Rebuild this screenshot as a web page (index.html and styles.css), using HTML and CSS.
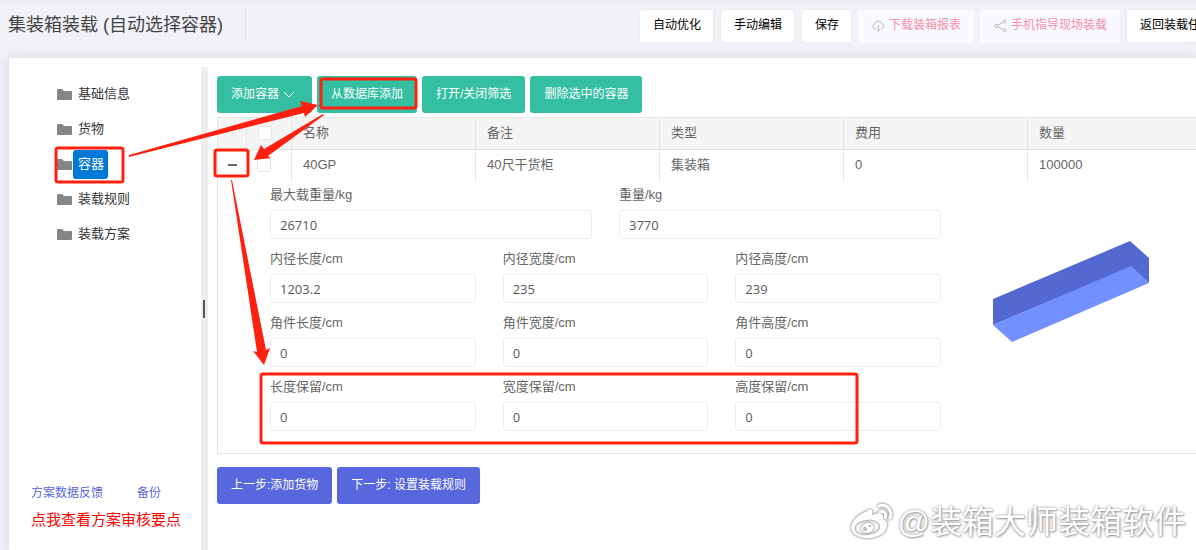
FILE: index.html
```html
<!DOCTYPE html>
<html lang="zh-CN">
<head>
<meta charset="utf-8">
<title>集装箱装载</title>
<link rel="stylesheet" href="styles.css">
</head>
<body>
<div class="page">
  <header class="header">
    <h1 class="title">集装箱装载 (自动选择容器)</h1>
    <div class="toolbar">
      <button class="tool">自动优化</button>
      <button class="tool">手动编辑</button>
      <button class="tool">保存</button>
      <button class="tool" disabled>
        <svg class="icon" viewBox="0 0 14 14"><path d="M4 10.5H3.4A2.7 2.7 0 0 1 3 5.200A4 4 0 0 1 10.800 5.200A2.700 2.700 0 0 1 10.600 10.500H10M7 6.500V13M5.300 11.300L7 13L8.700 11.300"/></svg>下载装箱报表</button>
      <button class="tool" disabled>
        <svg class="icon" viewBox="0 0 14 14"><circle cx="2.500" cy="7.500" r="1.700"/><circle cx="11.300" cy="2.700" r="1.700"/><circle cx="11.300" cy="12" r="1.700"/><path d="M4 6.700L9.800 3.500M4 8.300L9.800 11.300"/></svg>手机指导现场装载</button>
      <button class="tool">返回装载任务</button>
    </div>
  </header>

  <div class="panel">
    <aside class="sidebar">
      <nav class="tree">
        <a class="node" href="#"><svg class="folder" viewBox="0 0 15 11"><path d="M0 1Q0 0 1 0H5L7 2H14Q15 2 15 3V10Q15 11 14 11H1Q0 11 0 10Z"/></svg><span class="name">基础信息</span></a>
        <a class="node" href="#"><svg class="folder" viewBox="0 0 15 11"><path d="M0 1Q0 0 1 0H5L7 2H14Q15 2 15 3V10Q15 11 14 11H1Q0 11 0 10Z"/></svg><span class="name">货物</span></a>
        <a class="node" href="#"><svg class="folder" viewBox="0 0 15 11"><path d="M0 1Q0 0 1 0H5L7 2H14Q15 2 15 3V10Q15 11 14 11H1Q0 11 0 10Z"/></svg><span class="name selected">容器</span></a>
        <a class="node" href="#"><svg class="folder" viewBox="0 0 15 11"><path d="M0 1Q0 0 1 0H5L7 2H14Q15 2 15 3V10Q15 11 14 11H1Q0 11 0 10Z"/></svg><span class="name">装载规则</span></a>
        <a class="node" href="#"><svg class="folder" viewBox="0 0 15 11"><path d="M0 1Q0 0 1 0H5L7 2H14Q15 2 15 3V10Q15 11 14 11H1Q0 11 0 10Z"/></svg><span class="name">装载方案</span></a>
      </nav>
      <div class="side-links">
        <div class="link-row"><a class="link" href="#">方案数据反馈</a><a class="link" href="#">备份</a></div>
        <a class="tips" href="#">点我查看方案审核要点</a>
      </div>
    </aside>
    <div class="splitter"><span class="grip"></span></div>

    <main class="content">
      <div class="actions">
        <button class="btn green menu">添加容器<svg class="chevron" viewBox="0 0 12 12"><path d="M1 4L6 9L11 4"/></svg></button>
        <button class="btn green">从数据库添加</button>
        <button class="btn green">打开/关闭筛选</button>
        <button class="btn green">删除选中的容器</button>
      </div>

      <table class="grid">
        <colgroup><col class="c-expand"><col class="c-check"><col class="c-data"><col class="c-data"><col class="c-data"><col class="c-data"><col></colgroup>
        <thead>
          <tr><th></th><th class="check"><input type="checkbox" aria-label="全选"></th><th>名称</th><th>备注</th><th>类型</th><th>费用</th><th>数量</th></tr>
        </thead>
        <tbody>
          <tr class="row"><td class="expand"><button class="toggle" aria-label="收起"></button></td><td class="check"><input type="checkbox" aria-label="40GP"></td><td>40GP</td><td>40尺干货柜</td><td>集装箱</td><td>0</td><td>100000</td></tr>
          <tr><td class="detail" colspan="7">
            <div class="detail-body">
              <form class="form">
                <div class="field half"><label for="f1">最大载重量/kg</label><input id="f1" type="text" value="26710"></div>
                <div class="field half"><label for="f2">重量/kg</label><input id="f2" type="text" value="3770"></div>
                <div class="field"><label for="f3">内径长度/cm</label><input id="f3" type="text" value="1203.2"></div>
                <div class="field"><label for="f4">内径宽度/cm</label><input id="f4" type="text" value="235"></div>
                <div class="field"><label for="f5">内径高度/cm</label><input id="f5" type="text" value="239"></div>
                <div class="field"><label for="f6">角件长度/cm</label><input id="f6" type="text" value="0"></div>
                <div class="field"><label for="f7">角件宽度/cm</label><input id="f7" type="text" value="0"></div>
                <div class="field"><label for="f8">角件高度/cm</label><input id="f8" type="text" value="0"></div>
                <div class="field"><label for="f9">长度保留/cm</label><input id="f9" type="text" value="0"></div>
                <div class="field"><label for="f10">宽度保留/cm</label><input id="f10" type="text" value="0"></div>
                <div class="field"><label for="f11">高度保留/cm</label><input id="f11" type="text" value="0"></div>
              </form>
              <svg class="model" viewBox="0 0 156 101"><path fill="#5368d1" d="M0 58L137 0L156 17V42L138 26L0 84Z"/><path fill="#7290ff" d="M0 84L138 25L156 42L19 101Z"/></svg>
            </div>
          </td></tr>
        </tbody>
      </table>

      <div class="steps">
        <button class="btn blue">上一步:添加货物</button>
        <button class="btn blue">下一步: 设置装载规则</button>
      </div>
    </main>
  </div>

  <svg class="marks" aria-hidden="true">
    <g class="boxes">
      <rect x="56" y="148" width="67" height="34" rx="2"/>
      <rect x="321" y="79" width="95" height="29" rx="2"/>
      <rect x="215" y="150" width="33" height="26" rx="2"/>
      <rect x="261" y="374" width="596" height="69" rx="2"/>
    </g>
    <path d="M129 155L302 106L300 101L318 105L305 117L304 113L129 157Z"/>
    <path d="M323 114L264 149L261 145L254 160L271 158L268 156L324 115Z"/>
    <path d="M231 180L257 352L253 351L264 365L270 348L266 350L232 180Z"/>
  </svg>

  <div class="watermark">
    <svg class="weibo" viewBox="0 0 44 38"><path fill-rule="evenodd" d="M17 8C20 5 24 6 22 12C29 9 35 10 33 16C40 19 38 29 28 33C17 38 2 34 1 25C1 18 9 11 17 8ZM17 17C8 18 4 22 5 27C6 31 12 33 18 32C26 31 31 27 30 23C29 18 23 16 17 17ZM16 20C22 19 26 24 22 28C18 32 11 29 11 26C11 23 13 21 16 20ZM15 24A2 2 0 1 0 15 28A2 2 0 1 0 15 24ZM20 22A1 1 0 1 0 20 24A1 1 0 1 0 20 22Z"/><path class="wave" d="M29 3C37 0 43 8 40 15M30 9C34 7 37 11 35 15"/></svg>
    <span>@装箱大师装箱软件</span>
  </div>
</div>
</body>
</html>
```
FILE: styles.css
```css
* { box-sizing: border-box; }

body {
  margin: 0;
  background: #f0f1f7;
  color: #666;
  font: 13px/20px "Liberation Sans", "Noto Sans CJK SC", sans-serif;
}

button, input { font: inherit; }
a { text-decoration: none; }

.page {
  position: relative;
  display: flex;
  flex-direction: column;
  min-height: 100vh;
  overflow: hidden;
}

.header {
  display: flex;
  justify-content: space-between;
  padding: 9px 0 15px 8px;
  background: linear-gradient(#ebecf2, #f1f2f8 9px);
}

.title {
  margin: 0;
  padding-right: 22px;
  border-right: 1px solid #dfe0e6;
  color: #444;
  font-size: 18px;
  font-weight: 400;
  line-height: 32px;
  white-space: nowrap;
}

.toolbar {
  display: flex;
  gap: 6px;
  margin-right: -29px;
}

.tool {
  display: flex;
  align-items: center;
  gap: 4px;
  height: 34px;
  padding: 0 12px 2px 13px;
  border: 1px solid #ebecf2;
  border-radius: 3px;
  background: #fff;
  color: #000;
  font-size: 12px;
  white-space: nowrap;
}

.tool:disabled {
  border-color: #f9fafd;
  background: #f9fafd;
  color: #f590a7;
}

.icon {
  width: 13px;
  height: 13px;
  fill: none;
  stroke: #b5b6ba;
}

.panel {
  display: flex;
  flex: 1;
  margin-left: 9px;
  background: #fff;
  box-shadow: 0 0 12px rgba(70, 70, 90, 0.16);
}

.sidebar {
  display: flex;
  flex-direction: column;
  justify-content: space-between;
  width: 192px;
  padding: 19px 0;
}

.tree { padding-left: 48px; }

.node {
  display: flex;
  align-items: center;
  gap: 1px;
  height: 35px;
  color: #333;
}

.folder {
  width: 15px;
  height: 11px;
  fill: #858585;
}

.name {
  padding: 4px 4px 5px 5px;
  border-radius: 3px;
}

.selected {
  background: #0078d7;
  color: #fff;
}

.side-links { padding-left: 22px; }

.link-row {
  display: flex;
  gap: 34px;
  margin-bottom: 7px;
}

.link {
  color: #5867dd;
  font-size: 12px;
}

.tips {
  color: #f00;
  font-size: 15px;
}

.splitter {
  display: flex;
  align-items: center;
  width: 7px;
  margin-top: 9px;
  background: #eee;
}

.grip {
  width: 2px;
  height: 18px;
  margin-left: 2px;
  background: #555;
}

.content {
  flex: 1;
  min-width: 0;
  padding: 18px 0 18px 9px;
}

.actions, .steps {
  display: flex;
  gap: 5px;
}

.btn {
  display: flex;
  align-items: center;
  gap: 4px;
  height: 37px;
  padding: 0 14px 2px;
  border: 0;
  border-radius: 3px;
  color: #fff;
  font-size: 12px;
  white-space: nowrap;
}

.menu { padding-right: 17px; }

.green { background: #34bfa3; }
.blue { background: #5867dd; }

.chevron {
  width: 12px;
  height: 12px;
  fill: none;
  stroke: #fff;
}

.grid {
  width: 100%;
  margin: 4px 0 13px;
  border: 1px solid #e6e6e6;
  border-right: 0;
  border-spacing: 0;
  table-layout: fixed;
}

.c-expand { width: 28px; }
.c-check { width: 45px; }
.c-data { width: 184px; }

.grid th, .row td {
  height: 32px;
  padding: 0 0 2px 11px;
  border-left: 1px solid #e6e6e6;
  font-weight: 400;
  text-align: left;
}

.grid th {
  border-bottom: 1px solid #e1e1e1;
  background: #f5f5f5;
}

.grid th:first-child, .row td:nth-child(-n + 2) { border-left: 0; }

.grid .check { line-height: 0; }
.grid .expand { padding: 0; }

.check input {
  appearance: none;
  width: 14px;
  height: 14px;
  margin: 0;
  border: 1px solid #e6e6e6;
  border-radius: 2px;
  background: #fff;
}

.toggle {
  display: flex;
  align-items: center;
  justify-content: center;
  width: 28px;
  height: 28px;
  padding: 0 0 2px;
  border: 0;
  background: none;
}

.toggle::before {
  width: 9px;
  height: 2px;
  background: #666;
  content: "";
}

.detail { padding: 0 47px 14px 52px; }

.detail-body {
  display: flex;
  align-items: center;
  justify-content: space-between;
}

.form {
  display: grid;
  grid-template-columns: repeat(6, 1fr);
  column-gap: 27px;
  row-gap: 7px;
  width: 671px;
  padding-bottom: 8px;
}

.field {
  display: flex;
  flex-direction: column;
  grid-column: span 2;
  gap: 2px;
}

.half { grid-column: span 3; }

.field label { line-height: 26px; }

.field input {
  width: 100%;
  height: 29px;
  padding: 0 9px;
  border: 1px solid #ebedf2;
  border-radius: 3px;
  color: #575962;
  font-family: "Open Sans", sans-serif;
}

.model {
  width: 156px;
  height: 101px;
  margin-top: -39px;
}

/* Tutorial annotations lie over the working page. */
.marks {
  position: absolute;
  top: 0;
  left: 0;
  width: 100%;
  height: 100%;
  fill: #ff2010;
  pointer-events: none;
}

.boxes {
  fill: none;
  stroke: #ff2010;
  stroke-width: 3px;
}

.watermark {
  position: absolute;
  right: 10px;
  bottom: 8px;
  display: flex;
  align-items: center;
  gap: 4px;
  color: #fff;
  font-size: 32px;
  line-height: 40px;
  text-shadow: 0 0 3px #888, 1px 1px 2px #aaa;
  white-space: nowrap;
}

.weibo {
  width: 44px;
  height: 38px;
  fill: #fff;
  filter: drop-shadow(0 0 1px #888) drop-shadow(0 0 1px #bbb);
  overflow: visible;
}

.wave {
  fill: none;
  stroke: #fff;
  stroke-width: 3px;
  stroke-linecap: round;
}
```
